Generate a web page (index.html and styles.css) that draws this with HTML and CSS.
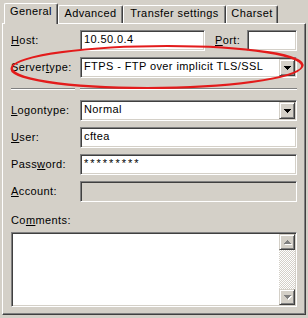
FILE: index.html
```html
<!DOCTYPE html>
<html lang="en">
<head>
  <meta charset="UTF-8">
  <title>Site properties</title>
  <link rel="stylesheet" href="styles.css">
</head>
<body>
  <div class="dialog">
    <div class="tabs">
      <div class="tab active tab-general">General</div>
      <div class="tab tab-advanced">Advanced</div>
      <div class="tab tab-transfer">Transfer settings</div>
      <div class="tab tab-charset">Charset</div>
    </div>

    <div class="panel">
      <div class="row">
        <label class="label"><u>H</u>ost:</label>
        <div class="field host">10.50.0.4</div>
        <label class="port-label"><u>P</u>ort:</label>
        <div class="field port"></div>
      </div>
      <div class="row">
        <label class="label">Server<u>t</u>ype:</label>
        <div class="field combo">
          <span class="value">FTPS - FTP over implicit TLS/SSL</span>
          <span class="btn">
            <svg width="7" height="4" viewBox="0 0 7 4" shape-rendering="crispEdges"><path d="M0 0h7v1h-1v1h-1v1h-1v1h-1v-1h-1v-1h-1v-1h-1z" fill="#000"/></svg>
          </span>
        </div>
      </div>

      <div class="sep"><span class="sep-left"></span><span class="sep-right"></span></div>

      <div class="row">
        <label class="label"><u>L</u>ogontype:</label>
        <div class="field combo">
          <span class="value">Normal</span>
          <span class="btn">
            <svg width="7" height="4" viewBox="0 0 7 4" shape-rendering="crispEdges"><path d="M0 0h7v1h-1v1h-1v1h-1v1h-1v-1h-1v-1h-1v-1h-1z" fill="#000"/></svg>
          </span>
        </div>
      </div>
      <div class="row">
        <label class="label"><u>U</u>ser:</label>
        <div class="field wide">cftea</div>
      </div>
      <div class="row">
        <label class="label">Pass<u>w</u>ord:</label>
        <div class="field wide secret">*********</div>
      </div>
      <div class="row">
        <label class="label"><u>A</u>ccount:</label>
        <div class="field wide disabled"></div>
      </div>

      <label class="comments-label">Co<u>m</u>ments:</label>
      <div class="field memo">
        <div class="scrollbar">
          <span class="btn sbtn">
            <svg class="dim" width="7" height="4" viewBox="0 0 7 4" shape-rendering="crispEdges"><path d="M3 0h1v1h1v1h1v1h1v1h-7v-1h1v-1h1v-1h1z" fill="#808080"/></svg>
          </span>
          <span class="track"></span>
          <span class="btn sbtn">
            <svg class="dim" width="7" height="4" viewBox="0 0 7 4" shape-rendering="crispEdges"><path d="M0 0h7v1h-1v1h-1v1h-1v1h-1v-1h-1v-1h-1v-1h-1z" fill="#808080"/></svg>
          </span>
        </div>
      </div>
    </div>

    <svg class="mark" width="308" height="318" viewBox="0 0 308 318">
      <ellipse cx="0" cy="0" rx="145" ry="21" transform="translate(157 67) skewX(-26)" fill="none" stroke="#e31b1b" stroke-width="2.2"/>
    </svg>
  </div>
</body>
</html>
```

FILE: styles.css
```css
body {
  margin: 0;
  background: #d4d0c8;
  font-family: "Liberation Sans", Arial, sans-serif;
  font-size: 11px;
  line-height: 13px;
  letter-spacing: 0.4px;
  color: #000;
}
.dialog {
  position: relative;
  width: 308px;
  height: 318px;
}

/* tabs */
.tabs {
  display: flex;
  align-items: flex-end;
  height: 23px;
  padding-left: 4px;
}
.tab {
  box-sizing: border-box;
  height: 18px;
  padding-top: 1px;
  text-align: center;
  border-top: 1px solid #fff;
  border-left: 1px solid #fff;
  border-right: 1px solid #404040;
  border-radius: 2px 2px 0 0;
  box-shadow: inset -1px 0 #808080;
}
.tab.active {
  position: relative;
  z-index: 1;
  height: 21px;
  margin-bottom: -1px;
  background: #d4d0c8;
}
.tab-general { width: 54px; }
.tab-advanced { width: 65px; }
.tab-transfer { width: 103px; }
.tab-charset { width: 52px; }

/* page */
.panel {
  box-sizing: border-box;
  display: flex;
  flex-direction: column;
  width: 304px;
  height: 292px;
  margin-left: 2px;
  padding: 6px 8px 0 8px;
  border-top: 1px solid #fff;
  border-left: 1px solid #fff;
  border-right: 1px solid #404040;
  border-bottom: 1px solid #404040;
  box-shadow: inset -1px -1px #808080;
}
.row {
  display: flex;
  align-items: center;
  height: 21px;
  margin-bottom: 6px;
}
.label {
  width: 69px;
  flex: none;
}
.port-label {
  margin-left: 10px;
}

.field {
  box-sizing: border-box;
  height: 21px;
  padding: 2px 3px 0;
  background: #fff;
  border-top: 1px solid #808080;
  border-left: 1px solid #808080;
  border-right: 1px solid #fff;
  border-bottom: 1px solid #fff;
  box-shadow: inset 1px 1px #404040, inset -1px -1px #d4d0c8;
  white-space: nowrap;
}
.host { width: 125px; }
.port { width: 50px; margin-left: auto; }
.wide { flex: 1; }
.secret { letter-spacing: 2px; }
.disabled { background: #d4d0c8; }

.combo {
  flex: 1;
  display: flex;
  padding: 1px;
}
.combo .value {
  flex: 1;
  padding: 1px 2px 0;
}

.btn {
  box-sizing: border-box;
  display: flex;
  align-items: center;
  justify-content: center;
  width: 16px;
  height: 17px;
  background: #d4d0c8;
  border-top: 1px solid #d4d0c8;
  border-left: 1px solid #d4d0c8;
  border-right: 1px solid #404040;
  border-bottom: 1px solid #404040;
  box-shadow: inset 1px 1px #fff, inset -1px -1px #808080;
}
.btn svg { display: block; }
.dim { filter: drop-shadow(1px 1px 0 #fff); }

.sep {
  display: flex;
  gap: 5px;
  margin: 4px 0 10px;
}
.sep span {
  height: 0;
  border-top: 1px solid #808080;
  border-bottom: 1px solid #fff;
}
.sep-left { width: 64px; }
.sep-right { flex: 1; }

.comments-label {
  display: block;
  margin: 6px 0 5px;
}
.memo {
  height: 75px;
  display: flex;
  justify-content: flex-end;
  padding: 1px;
}
.scrollbar {
  display: flex;
  flex-direction: column;
  width: 16px;
}
.sbtn { height: 16px; }
.track {
  flex: 1;
  background-image: repeating-conic-gradient(#fff 0 25%, #d4d0c8 0 50%);
  background-size: 2px 2px;
}

.mark {
  position: absolute;
  top: 0;
  left: 0;
  z-index: 2;
  pointer-events: none;
}
```
